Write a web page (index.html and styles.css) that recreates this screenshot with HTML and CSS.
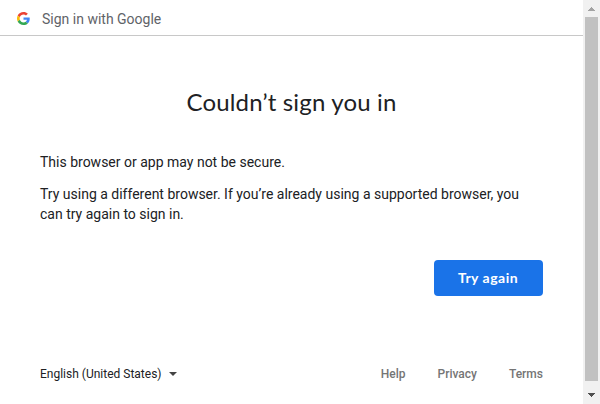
FILE: index.html
```
<!DOCTYPE html>
<html lang="en">
<head>
<meta charset="utf-8">
<title>Sign in</title>
<link rel="stylesheet" href="styles.css">
</head>
<body>
<div class="window">
  <div class="page">
    <header class="topbar">
      <svg class="logo" viewBox="0 0 48 48">
        <path fill="#ea4335" d="M24 9.5c3.54 0 6.71 1.22 9.21 3.6l6.85-6.85C35.9 2.38 30.47 0 24 0 14.62 0 6.51 5.38 2.56 13.22l7.98 6.19C12.43 13.72 17.74 9.5 24 9.5z"/>
        <path fill="#4285f4" d="M46.98 24.55c0-1.57-.15-3.09-.38-4.55H24v9.02h12.94c-.58 2.96-2.26 5.48-4.78 7.18l7.73 6c4.51-4.18 7.09-10.36 7.09-17.65z"/>
        <path fill="#fbbc05" d="M10.53 28.59c-.48-1.45-.76-2.99-.76-4.59s.27-3.14.76-4.59l-7.98-6.19C.92 16.46 0 20.12 0 24c0 3.88.92 7.54 2.56 10.78l7.97-6.19z"/>
        <path fill="#34a853" d="M24 48c6.48 0 11.93-2.13 15.89-5.81l-7.73-6c-2.15 1.45-4.92 2.3-8.16 2.3-6.26 0-11.57-4.22-13.47-9.91l-7.98 6.19C6.51 42.62 14.62 48 24 48z"/>
      </svg>
      <span class="topbar-text">Sign in with Google</span>
    </header>
    <main class="content">
      <h1 class="title">Couldn’t sign you in</h1>
      <p class="text">This browser or app may not be secure.</p>
      <p class="text">Try using a different browser. If you’re already using a supported browser, you can try again to sign in.</p>
      <div class="actions"><button class="button"><span class="button-label">Try again</span></button></div>
    </main>
    <footer class="footer">
      <div class="language"><span class="language-name">English (United States)</span><svg class="caret" viewBox="0 0 8 4"><path d="M0 0h8L4 4z"/></svg></div>
      <nav class="links"><a class="link help">Help</a><a class="link privacy">Privacy</a><a class="link terms">Terms</a></nav>
    </footer>
  </div>
  <div class="scrollbar">
    <div class="arrow"><svg class="arrow-icon" viewBox="0 0 7 4" shape-rendering="crispEdges"><path fill="#a3a3a3" d="M3 0h1v1h1v1h1v1h1v1H0V3h1V2h1V1h1z"/></svg></div>
    <div class="thumb"></div>
    <div class="arrow bottom"><svg class="arrow-icon" viewBox="0 0 7 4" shape-rendering="crispEdges"><path fill="#505050" d="M0 0h7v1H6v1H5v1H4v1H3V3H2V2H1V1H0z"/></svg></div>
  </div>
</div>
</body>
</html>
```
FILE: styles.css
```
* { box-sizing: border-box; }
body { margin: 0; background: #fff; color: #202124; font-family: Roboto, "Liberation Sans", sans-serif; overflow: hidden; }
.window { display: flex; width: 600px; height: 404px; }
.page { flex: 1; display: flex; flex-direction: column; }
.topbar { display: flex; align-items: center; height: 36px; padding: 2px 16px 0; border-bottom: 1px solid #c8c8c8; }
.logo { width: 14px; height: 13px; padding-left: 1px; margin-right: 12px; }
.topbar-text { font-size: 14px; line-height: 20px; color: #5f6368; }
.content { padding: 50px 40px 0; }
.title { margin: 0 0 34px; font: 400 24px/32px Lato, sans-serif; letter-spacing: .17px; text-align: center; }
.text { margin: 0 0 12px; font-size: 14px; line-height: 20px; }
.actions { display: flex; justify-content: flex-end; margin-top: 36px; }
.button { width: 109px; height: 36px; padding: 0 1px 1px 0; border: 0; border-radius: 4px; background: #1a73e8; color: #fff; font: 700 14px/20px Lato, sans-serif; letter-spacing: .5px; }
.button-label { display: inline-block; }
.footer { display: flex; justify-content: space-between; margin: 70px 40px 0; font-size: 12px; line-height: 16px; }
.language { display: flex; align-items: center; gap: 7.5px; }
.caret { width: 8px; height: 4px; fill: #444; }
.links { display: flex; gap: 32px; color: #757575; font-weight: 500; }
.scrollbar { display: flex; flex-direction: column; width: 17px; padding: 0 2px; background: #f1f1f1; }
.arrow { display: flex; justify-content: center; height: 17px; padding-top: 7px; }
.arrow.bottom { height: 23px; padding-top: 12px; }
.arrow-icon { width: 7px; height: 4px; }
.thumb { flex: 1; background: #c1c1c1; }
```
